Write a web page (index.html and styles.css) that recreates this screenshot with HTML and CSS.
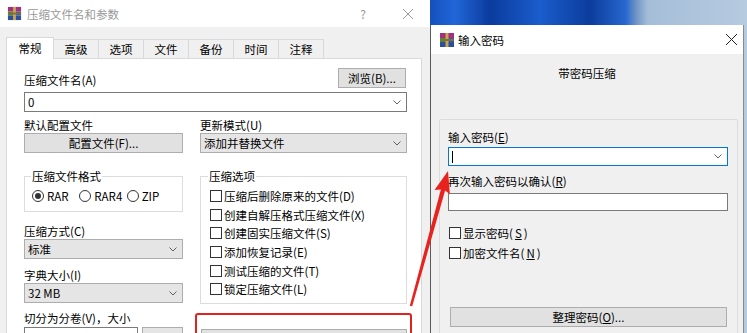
FILE: index.html
```html
<!DOCTYPE html>
<html lang="zh-CN">
<head>
<meta charset="UTF-8">
<meta name="viewport" content="width=device-width, initial-scale=1.0">
<title>压缩文件名和参数</title>
<link rel="stylesheet" href="styles.css">
</head>
<body>
<div class="screen">

  <!-- archive name and parameters dialog -->
  <div class="main">
    <div class="titlebar">
      <svg class="ico" viewBox="0 0 16 16">
        <rect x="1" y="1" width="14" height="5" fill="#a3307c"/>
        <rect x="1" y="6" width="7" height="4" fill="#3d8f3a"/>
        <rect x="8" y="6" width="7" height="4" fill="#2f5fb0"/>
        <rect x="1" y="10" width="14" height="5" fill="#2b4f9c"/>
        <rect x="6.5" y="1" width="3" height="14" fill="#c9a453"/>
        <rect x="1" y="7" width="14" height="2" fill="#8b6b30"/>
      </svg>
      <span class="title">压缩文件名和参数</span>
      <span class="help">?</span>
      <svg class="close" viewBox="0 0 10 10"><path d="M0 0L10 10M10 0L0 10" stroke="#9a9a9a" stroke-width="1"/></svg>
    </div>

    <div class="tabs">
      <div class="tab active">常规</div>
      <div class="tab">高级</div>
      <div class="tab">选项</div>
      <div class="tab">文件</div>
      <div class="tab">备份</div>
      <div class="tab">时间</div>
      <div class="tab">注释</div>
    </div>

    <div class="panel">
      <div class="row-name">
        <span>压缩文件名(A)</span>
        <div class="btn browse">浏览(B)...</div>
      </div>
      <div class="combo white">
        <span>0</span>
        <svg class="chev" viewBox="0 0 8 5"><path d="M0.5 0.5L4 4L7.5 0.5" fill="none" stroke="#606060"/></svg>
      </div>

      <div class="cols">
        <div class="col">
          <div class="lbl">默认配置文件</div>
          <div class="btn">配置文件(F)...</div>

          <fieldset class="group fmt">
            <legend>压缩文件格式</legend>
            <div class="radios">
              <div class="radio on"><i></i>RAR</div>
              <div class="radio"><i></i>RAR4</div>
              <div class="radio"><i></i>ZIP</div>
            </div>
          </fieldset>

          <div class="lbl lbl-method">压缩方式(C)</div>
          <div class="combo">
            <span>标准</span>
            <svg class="chev" viewBox="0 0 8 5"><path d="M0.5 0.5L4 4L7.5 0.5" fill="none" stroke="#606060"/></svg>
          </div>
          <div class="lbl lbl-dict">字典大小(I)</div>
          <div class="combo">
            <span>32 MB</span>
            <svg class="chev" viewBox="0 0 8 5"><path d="M0.5 0.5L4 4L7.5 0.5" fill="none" stroke="#606060"/></svg>
          </div>
          <div class="lbl lbl-split">切分为分卷(V)，大小</div>
          <div class="split">
            <div class="edit"></div>
            <div class="combo"></div>
          </div>
        </div>

        <div class="col">
          <div class="lbl">更新模式(U)</div>
          <div class="combo">
            <span>添加并替换文件</span>
            <svg class="chev" viewBox="0 0 8 5"><path d="M0.5 0.5L4 4L7.5 0.5" fill="none" stroke="#606060"/></svg>
          </div>

          <fieldset class="group opts">
            <legend>压缩选项</legend>
            <div class="check"><i></i>压缩后删除原来的文件(D)</div>
            <div class="check"><i></i>创建自解压格式压缩文件(X)</div>
            <div class="check"><i></i>创建固实压缩文件(S)</div>
            <div class="check"><i></i>添加恢复记录(E)</div>
            <div class="check"><i></i>测试压缩的文件(T)</div>
            <div class="check"><i></i>锁定压缩文件(L)</div>
          </fieldset>

          <div class="mark">
            <div class="btn">设置密码(P)...</div>
          </div>
        </div>
      </div>
    </div>
  </div>

  <!-- password dialog over the desktop -->
  <div class="side">
    <div class="pass">
      <div class="titlebar">
        <svg class="ico" viewBox="0 0 16 16">
          <rect x="1" y="1" width="14" height="5" fill="#a3307c"/>
          <rect x="1" y="6" width="7" height="4" fill="#3d8f3a"/>
          <rect x="8" y="6" width="7" height="4" fill="#2f5fb0"/>
          <rect x="1" y="10" width="14" height="5" fill="#2b4f9c"/>
          <rect x="6.5" y="1" width="3" height="14" fill="#c9a453"/>
          <rect x="1" y="7" width="14" height="2" fill="#8b6b30"/>
        </svg>
        <span class="title">输入密码</span>
        <svg class="close" viewBox="0 0 11 11"><path d="M0 0L11 11M11 0L0 11" stroke="#222" stroke-width="1"/></svg>
      </div>
      <div class="caption">带密码压缩</div>

      <div class="pwbox">
        <div>输入密码(<u>E</u>)</div>
        <div class="field focus">
          <span class="caret"></span>
          <svg class="chev" viewBox="0 0 8 5"><path d="M0.5 0.5L4 4L7.5 0.5" fill="none" stroke="#606060"/></svg>
        </div>
        <div class="lbl-again">再次输入密码以确认(<u>R</u>)</div>
        <div class="field"></div>
        <div class="checks">
          <div class="check"><i></i>显示密码(<u>S</u>)</div>
          <div class="check"><i></i>加密文件名(<u>N</u>)</div>
        </div>
        <div class="btn">整理密码(<u>O</u>)...</div>
      </div>
    </div>
  </div>

  <svg class="arrow" width="747" height="333" viewBox="0 0 747 333">
    <polygon points="409.8,305.7 440.9,189.4 434.5,190.1 448,171 449.9,194.3 445.1,190.6 412.2,306.3" fill="#e8231f"/>
  </svg>
</div>
</body>
</html>
```

FILE: styles.css
```css
* { box-sizing: border-box; }
html, body { margin: 0; padding: 0; }
body { width: 747px; height: 333px; overflow: hidden; background: #f0f0f0; font-family: "Noto Sans CJK SC", sans-serif; font-size: 11.5px; line-height: 16px; color: #000; }
u { text-decoration-thickness: 1px; text-underline-offset: 1px; }

.screen { position: relative; display: flex; height: 333px; }
.arrow { position: absolute; left: 0; top: 0; pointer-events: none; }

/* title bars */
.titlebar { display: flex; align-items: center; }
.titlebar .title { flex: 1; }
.ico { width: 15px; height: 15px; margin-right: 5px; flex: none; }
.close { width: 10px; height: 10px; flex: none; }

/* left dialog */
.main { width: 430px; flex: none; background: #f0f0f0; }
.main .titlebar { height: 27px; background: #fff; padding-left: 7px; color: #999; }
.help { width: 12px; margin-right: 34px; text-align: center; font-size: 12px; }
.main .close { margin-right: 17px; }

.tabs { display: flex; align-items: flex-end; height: 21px; margin-top: 10px; padding-left: 6px; }
.tab { width: 46px; height: 19px; margin-right: -1px; border: 1px solid #d9d9d9; border-bottom: none; background: #f0f0f0; text-align: center; line-height: 18px; }
.tab.active { position: relative; z-index: 1; width: 48px; height: 22px; margin-bottom: -1px; background: #fff; line-height: 21px; }

.panel { width: 416px; height: 290px; margin-left: 6px; padding: 9px 14px 0 17px; background: #fff; border: 1px solid #d9d9d9; }
.row-name { display: flex; justify-content: space-between; align-items: flex-end; height: 20px; }

.btn { height: 20px; background: #e1e1e1; border: 1px solid #adadad; text-align: center; line-height: 18px; }
.browse { width: 68px; margin-right: 1px; }

.combo { display: flex; align-items: center; justify-content: space-between; height: 20px; padding: 0 5px 0 3px; background: #e5e5e5; border: 1px solid #adadad; }
.combo.white { margin-top: 4px; background: #fff; border-color: #7a7a7a; }
.chev { width: 8px; height: 5px; flex: none; }

.cols { display: grid; grid-template-columns: 159px 207px; column-gap: 17px; }
.lbl { margin-top: 5px; }
.lbl-method { margin-top: 11px; }
.lbl-dict { margin-top: 8px; }
.lbl-split { margin-top: 7px; }

.group { min-width: 0; margin: 15px 0 0; border: 1px solid #dcdcdc; }
.group legend { padding: 0 1px; }
.fmt { padding: 0 8px 7px 7px; }
.fmt legend { margin-left: -1px; }
.opts { padding: 3px 8px 4px 9px; }
.opts legend { margin-left: -2px; }

.radios { display: flex; margin-top: 4px; }
.radio { display: flex; align-items: center; gap: 3px; width: 51px; }
.radio i { display: flex; align-items: center; justify-content: center; width: 12px; height: 12px; border: 1px solid #333; border-radius: 50%; background: #fff; }
.radio.on i::after { content: ""; width: 6px; height: 6px; border-radius: 50%; background: #333; }

.check { display: flex; align-items: center; gap: 2px; height: 18.6px; }
.check i { width: 12px; height: 12px; flex: none; border: 1px solid #333; background: #fff; }

.split { display: flex; gap: 4px; margin-top: 1px; }
.split .edit { width: 114px; height: 20px; background: #fff; border: 1px solid #7a7a7a; }
.split .combo { flex: 1; }

.mark { margin: 9px -5px 0; padding: 14px 3px 10px 4px; border: 2px solid #e3211e; border-radius: 3px; }

/* right side: desktop and password dialog */
.side { width: 317px; flex: none; padding-top: 25px; background: linear-gradient(90deg, #1450bd 0px, #2266d8 25px, #0b3b9e 60px, #1a5dcc 110px, #0c3c9c 160px, #2868d0 196px, #6e94c6 206px, #a5bed8 218px, #b6cae0 317px); }
.pass { width: 314px; height: 308px; background: #f0f0f0; border-left: 1px solid #5a5a5a; border-right: 1px solid #8a8a8a; }
.pass .titlebar { height: 29px; padding-left: 8px; background: #fff; }
.pass .ico { width: 16px; height: 16px; margin-right: 3px; }
.pass .close { width: 11px; height: 11px; margin-right: 6px; }
.caption { padding-top: 11px; text-align: center; }

.pwbox { margin: 38px 5px 0 8px; padding: 9px 9px 20px 8px; border: 1px solid #dcdcdc; border-radius: 2px; }
.field { height: 18px; margin-top: 4px; background: #fff; border: 1px solid #7a7a7a; }
.field.focus { display: flex; align-items: center; justify-content: space-between; height: 19px; margin-top: 2px; padding: 0 5px 0 3px; border-color: #0078d7; }
.caret { width: 1px; height: 12px; background: #000; }
.lbl-again { margin-top: 7px; }
.checks { margin-top: 12px; }
.checks .check { height: 20px; padding-left: 1px; }
.pwbox .btn { margin: 44px 1px 0 2px; }
```
